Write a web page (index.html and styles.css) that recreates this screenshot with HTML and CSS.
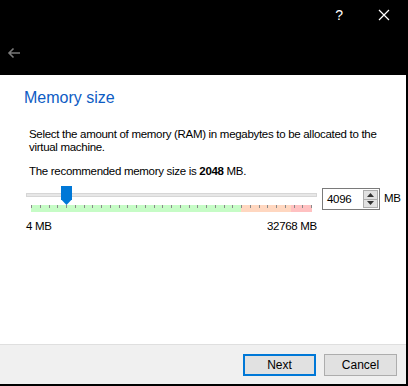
FILE: index.html
```html
<!DOCTYPE html>
<html lang="en">
<head>
  <meta charset="UTF-8">
  <title>Memory size</title>
  <link rel="stylesheet" href="styles.css">
</head>
<body>
  <div class="window">
    <!-- Title bar -->
    <div class="titlebar">
      <div class="title-buttons">
        <span class="help">?</span>
        <svg class="close" width="12" height="12" viewBox="0 0 12 12">
          <path d="M1 1 L11 11 M11 1 L1 11" stroke="#fff" stroke-width="1.2"/>
        </svg>
      </div>
      <svg class="back" width="14" height="12" viewBox="0 0 14 12">
        <path d="M13 6 H2 M6.5 1.5 L2 6 L6.5 10.5" stroke="#7a7a7a" stroke-width="1.6" fill="none"/>
      </svg>
    </div>

    <div class="page">
      <div class="content">
        <h1>Memory size</h1>
        <p class="text">Select the amount of memory (RAM) in megabytes to be allocated to the virtual machine.</p>
        <p class="text recommend">The recommended memory size is <b>2048</b> MB.</p>

        <div class="memory-row">
          <div class="slider-col">
            <div class="slider">
              <div class="track"></div>
              <div class="thumb"></div>
            </div>
            <div class="scale">
              <div class="zone green"></div>
              <div class="zone peach"></div>
              <div class="zone red"></div>
              <div class="ticks" id="ticks"></div>
            </div>
            <div class="limits">
              <span>4 MB</span>
              <span>32768 MB</span>
            </div>
          </div>
          <div class="spin">
            <span class="spin-value">4096</span>
            <div class="spin-buttons">
              <div class="spin-btn"><svg width="7" height="4" viewBox="0 0 7 4"><path d="M0 4 L3.5 0 L7 4 Z" fill="#333"/></svg></div>
              <div class="spin-btn"><svg width="7" height="4" viewBox="0 0 7 4"><path d="M0 0 L3.5 4 L7 0 Z" fill="#333"/></svg></div>
            </div>
          </div>
          <span class="unit">MB</span>
        </div>
      </div>

      <div class="footer">
        <button class="btn default">Next</button>
        <button class="btn">Cancel</button>
      </div>
    </div>
  </div>

  <script>
    // one tick per 1024 MB along the slider scale
    var ticks = document.getElementById('ticks');
    for (var i = 0; i <= 32; i++) {
      var t = document.createElement('span');
      t.className = 'tick';
      ticks.appendChild(t);
    }
  </script>
</body>
</html>
```

FILE: styles.css
```css
* {
  margin: 0;
  padding: 0;
  box-sizing: border-box;
}

body {
  background: #000;
  font-family: 'Segoe UI', 'Liberation Sans', sans-serif;
  font-size: 11.5px;
  letter-spacing: -0.3px;
  color: #000;
}

.window {
  width: 408px;
  height: 386px;
  display: flex;
  flex-direction: column;
}

/* Title bar */
.titlebar {
  height: 75px;
  padding: 5px 0 0 7px;
  letter-spacing: 0;
}

.title-buttons {
  display: flex;
  justify-content: flex-end;
  align-items: center;
  gap: 35px;
  padding-right: 18px;
  height: 20px;
}

.help {
  color: #fff;
  font-size: 14px;
}

.back {
  margin-top: 22px;
  display: block;
}

/* Page */
.page {
  flex: 1;
  background: #fff;
  margin: 0 2px 2px 0;
  display: flex;
  flex-direction: column;
}

.content {
  flex: 1;
  padding: 14px 0 0 24px;
}

h1 {
  font-size: 16px;
  font-weight: normal;
  letter-spacing: 0;
  color: #0d5cc4;
  margin-bottom: 21px;
}

.text {
  width: 360px;
  padding-left: 5px;
  line-height: 13px;
}

.recommend {
  margin-top: 11px;
}

/* Slider row */
.memory-row {
  display: flex;
  align-items: flex-start;
  margin-top: 2px;
  margin-left: 2px;
}

.slider-col {
  width: 291px;
}

.slider {
  height: 25px;
  position: relative;
}

.track {
  position: absolute;
  left: 0;
  right: 0;
  top: 13px;
  height: 4px;
  background: #e7e7e7;
  border: 1px solid #d6d6d6;
}

.thumb {
  position: absolute;
  left: 35px;
  top: 6px;
  width: 11px;
  height: 19px;
  background: #0078d7;
  clip-path: polygon(0 0, 100% 0, 100% 70%, 50% 100%, 0 70%);
}

.scale {
  margin-left: 5px;
  width: 281px;
  height: 7px;
  display: flex;
  position: relative;
}

.zone.green { width: 210px; background: #c6fcc6; }
.zone.peach { width: 50px; background: #ffd7c0; }
.zone.red { width: 21px; background: #ffc1c1; }

.ticks {
  position: absolute;
  left: 0;
  right: 0;
  top: 0;
  display: flex;
  justify-content: space-between;
}

.tick {
  width: 1px;
  height: 3px;
  background: #8a8a8a;
}

.limits {
  display: flex;
  justify-content: space-between;
  margin-top: 8px;
}

/* Spin box */
.spin {
  margin-top: 8px;
  margin-left: 5px;
  width: 58px;
  height: 22px;
  border: 1px solid #7a7a7a;
  display: flex;
  align-items: center;
  padding-left: 4px;
}

.spin-value {
  flex: 1;
}

.spin-buttons {
  width: 15px;
  height: 18px;
  margin-right: 1px;
  display: flex;
  flex-direction: column;
  border: 1px solid #adadad;
  background: #e1e1e1;
}

.spin-btn {
  flex: 1;
  display: flex;
  align-items: center;
  justify-content: center;
}

.spin-btn + .spin-btn {
  border-top: 1px solid #adadad;
}

.unit {
  margin-top: 12px;
  margin-left: 4px;
}

/* Footer */
.footer {
  height: 40px;
  background: #f0f0f0;
  border-top: 1px solid #dfdfdf;
  display: flex;
  justify-content: flex-end;
  align-items: flex-start;
  gap: 8px;
  padding: 9px 9px 0 0;
}

.btn {
  width: 73px;
  height: 22px;
  font-family: inherit;
  font-size: 12px;
  background: #e1e1e1;
  border: 1px solid #adadad;
  color: #000;
}

.btn.default {
  border: 2px solid #0078d7;
}
```
